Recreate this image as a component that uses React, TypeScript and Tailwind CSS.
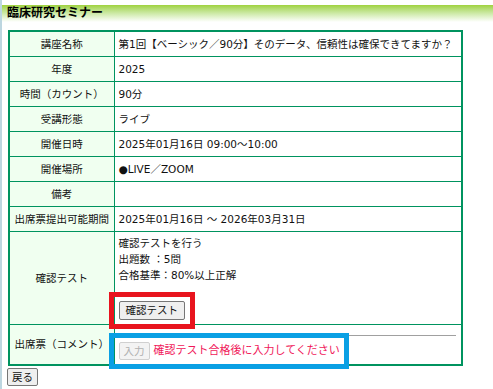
const rows: [string, string][] = [
  ['講座名称', '第1回【ベーシック／90分】そのデータ、信頼性は確保できてますか？'],
  ['年度', '2025'],
  ['時間（カウント）', '90分'],
  ['受講形態', 'ライブ'],
  ['開催日時', '2025年01月16日 09:00～10:00'],
  ['開催場所', '●LIVE／ZOOM'],
  ['備考', ''],
  ['出席票提出可能期間', '2025年01月16日 ～ 2026年03月31日'],
];

const labelCell = 'h-[25px] w-[105px] border border-[#00935f] bg-[#f0fff0] p-0 text-center align-middle';
const valueCell = 'h-[25px] border border-[#00935f] px-[4px] py-0 text-left align-middle';

export default function App() {
  return (
    <div
      className="min-h-screen border-l-2 border-[#bdd6e0] bg-white text-[10.5px] leading-[16px] text-[#111]"
      style={{ fontFamily: '"DejaVu Sans", "Noto Sans CJK JP", sans-serif' }}
    >
      <div className="pt-[5px]">
        <div className="h-[17px] bg-gradient-to-b from-[#9fd23a] to-white pl-[5px] text-[12px] font-bold leading-[17px] text-black">
          臨床研究セミナー
        </div>
      </div>
      <table className="ml-[6px] mt-[8px] w-[455px] border-collapse border-2 border-[#00935f]">
        <tbody>
          {rows.map(([label, value]) => (
            <tr key={label}>
              <td className={labelCell}>{label}</td>
              <td className={valueCell}>{value}</td>
            </tr>
          ))}
          <tr>
            <td className="h-[93px] w-[105px] border border-[#00935f] bg-[#f0fff0] p-0 text-center align-middle">
              確認テスト
            </td>
            <td className="h-[93px] border border-[#00935f] px-[4px] pt-[3px] pb-[3px] align-top">
              <div>確認テストを行う</div>
              <div>出題数 ：5問</div>
              <div>合格基準：80%以上正解</div>
              <div className="relative mt-[18px] inline-block">
                <button className="h-[19px] rounded-[2px] border border-[#767676] bg-[#efefef] px-[6px] text-[10.5px] leading-[17px] text-[#111]">
                  確認テスト
                </button>
                <div className="pointer-events-none absolute -top-[9px] -bottom-[9px] -left-[10px] -right-[10px] border-[5px] border-[#e8141e]" />
              </div>
            </td>
          </tr>
          <tr>
            <td className="h-[40px] w-[105px] border border-[#00935f] bg-[#f0fff0] p-0 text-center align-middle">
              出席票（コメント）
            </td>
            <td className="h-[40px] border border-[#00935f] px-[4px] pt-[10px] pb-[4px] align-top">
              <div className="relative mr-[1px] border-t border-[#a0a0a0]">
                <div className="relative mt-[6px] inline-flex items-center gap-[4px]">
                  <button
                    disabled
                    className="h-[18px] rounded-[2px] border border-[#d0d0d0] bg-[#f3f3f3] px-[4px] text-[10.5px] leading-[16px] text-[#b0b0b0]"
                  >
                    入力
                  </button>
                  <span className="text-[11px] text-[#f0185a]">確認テスト合格後に入力してください</span>
                  <div className="pointer-events-none absolute -top-[9px] -bottom-[9px] -left-[10px] -right-[9px] border-[5px] border-[#0aa0e4]" />
                </div>
              </div>
            </td>
          </tr>
        </tbody>
      </table>
      <button className="ml-[5px] mt-[2px] h-[18px] rounded-[2px] border border-[#767676] bg-[#efefef] px-[4px] text-[10.5px] leading-[16px] text-[#111]">
        戻る
      </button>
    </div>
  );
}
